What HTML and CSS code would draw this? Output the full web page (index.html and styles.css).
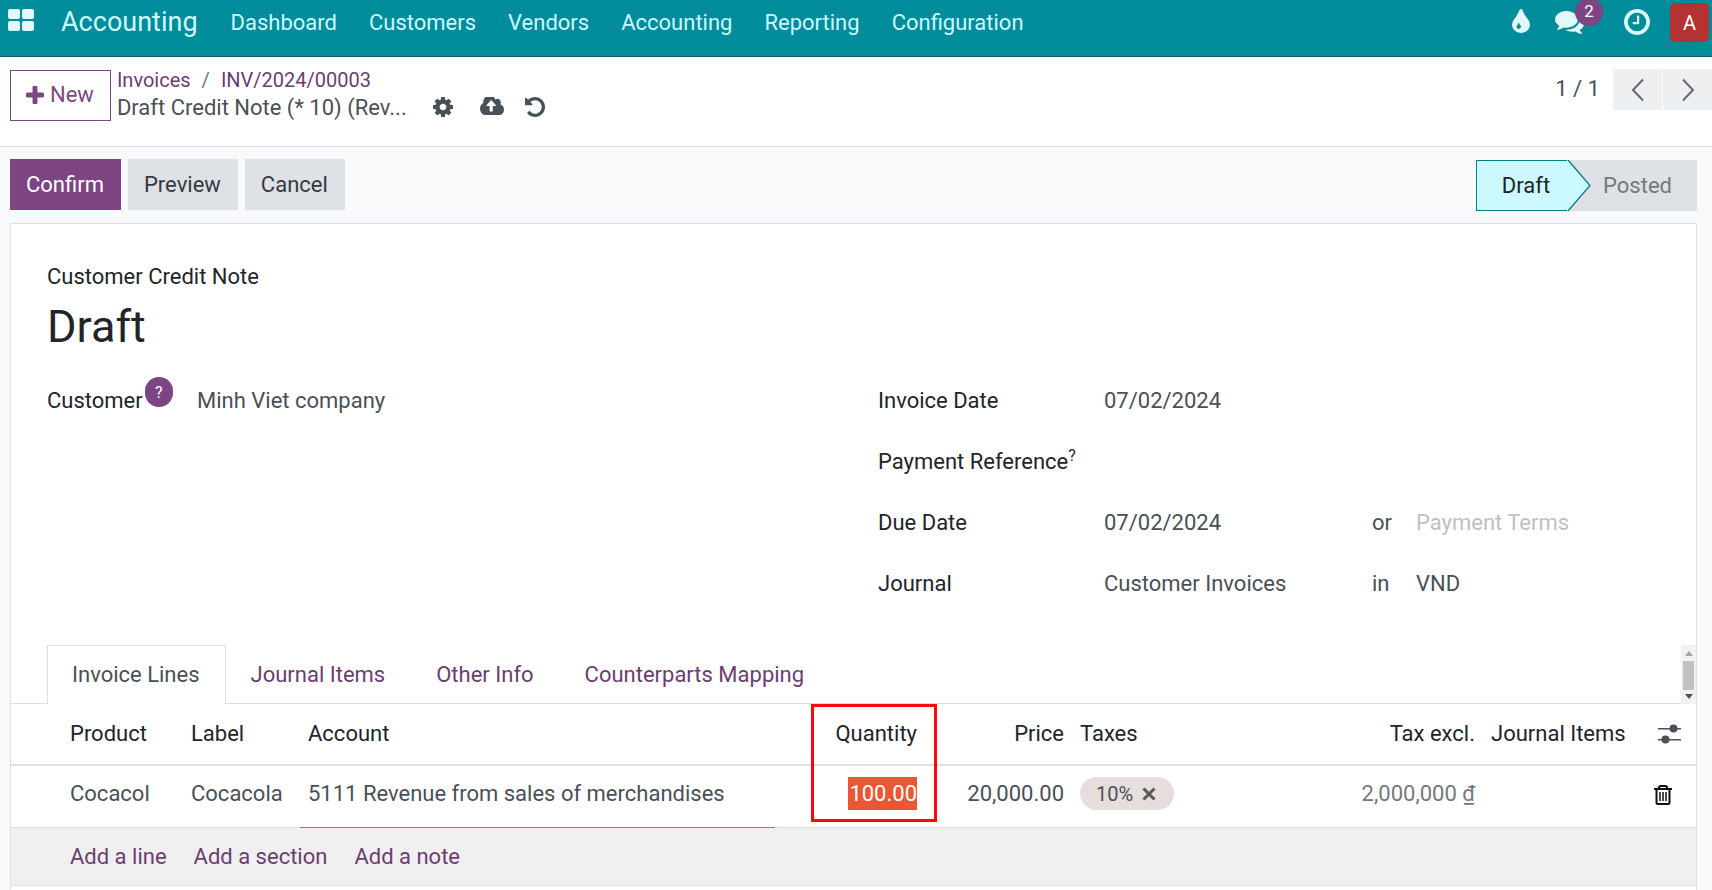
FILE: index.html
```html
<!DOCTYPE html>
<html lang="en">
<head>
<meta charset="utf-8">
<title>Draft Credit Note - Accounting</title>
<link rel="stylesheet" href="styles.css">
</head>
<body>
<header class="navbar">
  <button class="icon-btn apps" aria-label="Apps">
    <svg width="26" height="22" viewBox="0 0 26 22" fill="#e3f8fa"><rect width="12" height="10" rx="2"/><rect x="14" width="12" height="10" rx="2"/><rect y="12" width="12" height="10" rx="2"/><rect x="14" y="12" width="12" height="10" rx="2"/></svg>
  </button>
  <a class="brand" href="#">Accounting</a>
  <nav class="menu">
    <a href="#">Dashboard</a><a href="#">Customers</a><a href="#">Vendors</a><a href="#">Accounting</a><a href="#">Reporting</a><a href="#">Configuration</a>
  </nav>
  <div class="systray">
    <button class="icon-btn" aria-label="Theme"><svg width="18" height="25" viewBox="384 0 1024 1536" preserveAspectRatio="none" fill="#e3f8fa"><path d="M896 1152q0-36-20-69-1-1-15.5-22.5t-25.5-38-25-44-21-50.5q-4-16-21-16t-21 16q-7 23-21 50.5t-25 44-25.5 38-15.5 22.5q-20 33-20 69 0 53 37.5 90.5t90.5 37.5 90.5-37.5 37.5-90.5zm512-128q0 212-150 362t-362 150-362-150-150-362q0-145 81-275 6-9 62.5-90.5t101-151 99.5-178 83-201.5q9-30 34-47t51-17 51.5 17 33.5 47q28 93 83 201.5t99.5 178 101 151 62.5 90.5q81 127 81 275z"/></svg></button>
    <button class="icon-btn messages" aria-label="Messages"><svg width="29" height="23" viewBox="0 256 1792 1408" fill="#e3f8fa"><path d="M1408 768q0 139-94 257t-256.500 186.500-353.500 68.500q-86 0-176-16-124 88-278 128-36 9-86 16h-3q-11 0-20.500-8t-11.500-21q-1-3-1-6.500t.5-6.500 2-6l2.500-5 3.500-5.500 4-5 4.500-5 4-4.500q5-6 23-25t26-29.500 22.500-29 25-38.500 20.500-44q-124-72-195-177t-71-224q0-139 94-257t256.500-186.500 353.500-68.500 353.500 68.500 256.500 186.500 94 257zm384 256q0 120-71 224.500t-195 176.500q10 24 20.500 44t25 38.500 22.500 29 26 29.500 23 25q1 1 4 4.500t4.500 5 4 5 3.500 5.500l2.500 5 2 6 .5 6.500-1 6.500q-3 14-13 22t-22 7q-50-7-86-16-154-40-278-128-90 16-176 16-271 0-472-132 58 4 88 4 161 0 309-45t264-129q125-92 192-212t67-254q0-77-23-152 129 71 204 178t75 230z"/></svg><span class="badge">2</span></button>
    <button class="icon-btn clock" aria-label="Activities"><svg width="26" height="26" viewBox="128 128 1536 1536" fill="#d8fbff"><path d="M1024 544v448q0 14-9 23t-23 9h-320q-14 0-23-9t-9-23v-64q0-14 9-23t23-9h224v-352q0-14 9-23t23-9h64q14 0 23 9t9 23zm416 352q0-148-73-273t-198-198-273-73-273 73-198 198-73 273 73 273 198 198 273 73 273-73 198-198 73-273zm224 0q0 209-103 385.500t-279.500 279.500-385.500 103-385.500-103-279.500-279.500-103-385.500 103-385.500 279.500-279.500 385.500-103 385.500 103 279.500 279.500 103 385.500z"/></svg></button>
    <button class="avatar" aria-label="User menu">A</button>
  </div>
</header>

<section class="control-panel">
  <button class="btn btn-new"><svg width="18" height="18" viewBox="192 128 1408 1408" fill="currentColor"><path d="M1600 736v192q0 40-28 68t-68 28h-416v416q0 40-28 68t-68 28h-192q-40 0-68-28t-28-68v-416h-416q-40 0-68-28t-28-68v-192q0-40 28-68t68-28h416v-416q0-40 28-68t68-28h192q40 0 68 28t28 68v416h416q40 0 68 28t28 68z"/></svg>New</button>
  <div class="crumbs">
    <nav class="crumb-path" aria-label="Breadcrumb"><a href="#">Invoices</a><span class="slash">/</span><a href="#">INV/2024/00003</a></nav>
    <div class="crumb-current">
      <span class="crumb-title">Draft Credit Note (* 10) (Rev...</span>
      <button class="icon-btn gear" aria-label="Actions"><svg width="20" height="20" viewBox="128 128 1536 1536" fill="#495057"><path d="M1152 896q0-106-75-181t-181-75-181 75-75 181 75 181 181 75 181-75 75-181zm512-109v222q0 12-8 23t-20 13l-185 28q-19 54-39 91 35 50 107 138 10 12 10 25t-9 23q-27 37-99 108t-94 71q-12 0-26-9l-138-108q-44 23-91 38-16 136-29 186-7 28-36 28h-222q-14 0-24.500-8.500t-11.500-21.500l-28-184q-49-16-90-37l-141 107q-10 9-25 9-14 0-25-11-126-114-165-168-7-10-7-23 0-12 8-23 15-21 51-66.500t54-70.500q-27-50-41-99l-183-27q-13-2-21-12.500t-8-23.500v-222q0-12 8-23t19-13l186-28q14-46 39-92-40-57-107-138-10-12-10-24 0-10 9-23 26-36 98.500-107.500t94.500-71.500q13 0 26 10l138 107q44-23 91-38 16-136 29-186 7-28 36-28h222q14 0 24.500 8.500t11.500 21.500l28 184q49 16 90 37l142-107q9-9 24-9 13 0 25 10 129 119 165 170 7 8 7 22 0 12-8 23-15 21-51 66.500t-54 70.500q26 50 41 98l183 28q13 2 21 12.500t8 23.500z"/></svg></button>
      <button class="icon-btn save" aria-label="Save"><svg width="24" height="18" viewBox="-64 256 1920 1280" preserveAspectRatio="none" fill="#495057"><path d="M1216 864q0-14-9-23l-352-352q-9-9-23-9t-23 9l-351 351q-10 12-10 24 0 14 9 23t23 9h224v352q0 13 9.500 22.500t22.500 9.500h192q13 0 22.500-9.500t9.500-22.500v-352h224q13 0 22.500-9.500t9.500-22.500zm640 288q0 159-112.500 271.500t-271.500 112.500h-1088q-185 0-316.500-131.500t-131.500-316.500q0-130 70-240t188-165q-2-30-2-43 0-212 150-362t362-150q156 0 285.500 87t188.500 231q71-62 166-62 106 0 181 75t75 181q0 76-41 138 130 31 213.500 135.500t83.500 238.500z"/></svg></button>
      <button class="icon-btn" aria-label="Discard"><svg width="20" height="20" viewBox="128 128 1536 1536" fill="#495057"><path d="M1664 896q0 156-61 298t-164 245-245 164-298 61q-172 0-327-72.500t-264-204.500q-7-10-6.500-22.500t8.500-20.500l137-138q10-9 25-9 16 2 23 12 73 95 179 147t225 52q104 0 198.500-40.500t163.500-109.500 109.500-163.500 40.500-198.500-40.500-198.500-109.500-163.500-163.500-109.500-198.500-40.500q-98 0-188 35.500t-160 101.500l137 138q31 30 14 69-17 40-59 40h-448q-26 0-45-19t-19-45v-448q0-42 40-59 39-17 69 14l130 129q107-101 244.500-156.500t284.500-55.500q156 0 298 61t245 164 164 245 61 298z"/></svg></button>
    </div>
  </div>
  <div class="pager">
    <span class="pager-count">1 / 1</span>
    <button class="pager-btn" aria-label="Previous"><svg width="14" height="24" viewBox="0 0 14 24" fill="none" stroke="#666a6e" stroke-width="2"><path d="M12 1.500 2 12l10 10.500"/></svg></button>
    <button class="pager-btn" aria-label="Next"><svg width="14" height="24" viewBox="0 0 14 24" fill="none" stroke="#666a6e" stroke-width="2"><path d="m2 1.500 10 10.500L2 22.500"/></svg></button>
  </div>
</section>

<main class="content">
  <div class="statusbar">
    <button class="btn btn-primary">Confirm</button>
    <button class="btn btn-secondary">Preview</button>
    <button class="btn btn-secondary">Cancel</button>
    <div class="stages">
      <button class="stage stage-current">Draft<svg class="stage-arrow" width="25" height="51" viewBox="0 0 25 51"><path d="M0 0h1l22 25.500L1 51H0z" fill="#ccf9ff"/><path d="M1 0l22 25.500L1 51" fill="none" stroke="#017e84" stroke-width="1.300"/></svg></button>
      <button class="stage stage-next">Posted</button>
    </div>
  </div>

  <div class="sheet">
    <div class="title-block">
      <div class="doc-type">Customer Credit Note</div>
      <h1>Draft</h1>
    </div>

    <div class="groups">
      <div class="group">
        <label class="field-label" for="customer">Customer<span class="help-badge">?</span></label>
        <input class="field" id="customer" value="Minh Viet company">
      </div>
      <div class="group group-right">
        <label class="field-label" for="inv-date">Invoice Date</label>
        <input class="field" id="inv-date" value="07/02/2024">
        <label class="field-label" for="pay-ref">Payment Reference<sup>?</sup></label>
        <input class="field" id="pay-ref">
        <label class="field-label" for="due-date">Due Date</label>
        <input class="field" id="due-date" value="07/02/2024">
        <label class="joiner" for="terms">or</label>
        <input class="field" id="terms" placeholder="Payment Terms">
        <label class="field-label" for="journal">Journal</label>
        <input class="field" id="journal" value="Customer Invoices">
        <label class="joiner" for="currency">in</label>
        <input class="field" id="currency" value="VND">
      </div>
    </div>

    <div class="tabs">
      <div class="tab-list" role="tablist">
        <button class="tab tab-active" role="tab" aria-selected="true">Invoice Lines</button>
        <button class="tab" role="tab">Journal Items</button>
        <button class="tab" role="tab">Other Info</button>
        <button class="tab" role="tab">Counterparts Mapping</button>
      </div>
      <div class="scroller" aria-hidden="true">
        <svg width="8" height="5" viewBox="0 0 8 5"><path d="M0 5 4 0l4 5z" fill="#a3a3a3"/></svg>
        <span class="thumb"></span>
        <svg width="8" height="5" viewBox="0 0 8 5"><path d="M0 0h8L4 5z" fill="#505050"/></svg>
      </div>
    </div>

    <table class="lines">
      <colgroup><col class="c-product"><col class="c-label"><col class="c-account"><col class="c-qty"><col class="c-price"><col class="c-taxes"><col class="c-excl"><col class="c-items"><col class="c-tools"></colgroup>
      <thead>
        <tr>
          <th class="first">Product</th><th>Label</th><th>Account</th><th class="num qty-head">Quantity</th><th class="num">Price</th><th>Taxes</th><th class="num">Tax excl.</th><th>Journal Items</th>
          <th class="tools"><button class="icon-btn" aria-label="Optional columns"><svg width="23" height="20" viewBox="0 0 23 20" fill="#495057"><path d="M0 4h23v1.500H0zM0 15h23v1.500H0z"/><circle cx="15.500" cy="4.500" r="4"/><circle cx="7.500" cy="15.500" r="4"/></svg></button></th>
        </tr>
      </thead>
      <tbody>
        <tr>
          <td class="first"><input class="cell" aria-label="Product" value="Cocacol"></td>
          <td><input class="cell" aria-label="Label" value="Cocacola"></td>
          <td class="editing"><input class="cell" aria-label="Account" value="5111 Revenue from sales of merchandises"></td>
          <td class="num"><input class="cell cell-selected" aria-label="Quantity" value="100.00"></td>
          <td class="num"><input class="cell" aria-label="Price" value="20,000.00"></td>
          <td><span class="tag">10%<button class="icon-btn" aria-label="Remove tax"><svg width="14" height="14" viewBox="0 0 14 14" stroke="#5b5858" stroke-width="3"><path d="m1.500 1.500 11 11m0-11-11 11"/></svg></button></span></td>
          <td class="num muted">2,000,000 ₫</td>
          <td></td>
          <td class="tools trash"><button class="icon-btn" aria-label="Delete row"><svg width="18" height="20" viewBox="0 0 18 20" fill="none" stroke="#111" stroke-width="2"><path d="M0 4h18M5 4V2.500Q5 1 6.500 1h5Q13 1 13 2.500V4M2.500 4v13.500Q2.500 19 4 19h10q1.500 0 1.500-1.500V4"/><path d="M6 7v9M9 7v9M12 7v9" stroke-width="1.500"/></svg></button></td>
        </tr>
      </tbody>
      <tfoot>
        <tr><td class="first" colspan="9"><div class="adders"><a href="#">Add a line</a><a href="#">Add a section</a><a href="#">Add a note</a></div></td></tr>
      </tfoot>
    </table>
  </div>
</main>
</body>
</html>
```
FILE: styles.css
```css
*, *::after { box-sizing: border-box; }

body {
  margin: 0;
  min-height: 100vh;
  display: flex;
  flex-direction: column;
  background: #f8f9fb;
  color: #212529;
  font: 22px/32px Roboto, "Noto Sans", sans-serif;
}

a { color: #6b3e70; text-decoration: none; }
button, input { font: inherit; color: inherit; }
svg { display: block; }

.icon-btn {
  display: block;
  padding: 0;
  border: 0;
  background: none;
}

/* Top bar */
.navbar {
  display: flex;
  align-items: flex-start;
  height: 57px;
  padding: 0 3px 0 8px;
  background: #008c9b;
  border-bottom: 1px solid #1d5a66;
}
.navbar a { color: #ccf9ff; }
.apps { padding-top: 9px; }
.brand { margin: 6px 33px 0 27px; font-size: 27px; }
.menu { display: flex; gap: 32px; padding-top: 7px; }
.systray { display: flex; align-items: flex-start; margin-left: auto; padding-top: 3px; }
.systray .icon-btn { padding-top: 5px; }
.systray .messages { position: relative; margin: 3px 40px 0 25px; }
.systray .clock { padding-top: 6px; margin-right: 20px; }
.badge {
  position: absolute;
  left: 20px;
  top: -8px;
  width: 28px;
  height: 28px;
  border-radius: 14px;
  background: #7d4583;
  color: #fff;
  font-size: 17px;
  line-height: 26px;
}
.avatar {
  width: 39px;
  height: 39px;
  padding: 0;
  border: 0;
  border-radius: 5px;
  background: #b53232;
  color: #fff;
  font-size: 20px;
}

/* Control panel */
.control-panel {
  display: flex;
  align-items: flex-start;
  min-height: 90px;
  padding: 12px 0 0 10px;
  background: #fff;
  border-bottom: 1px solid #dcdfe3;
}
.btn {
  height: 51px;
  padding: 0 17px 0 16px;
  border: 0;
}
.btn-new {
  display: flex;
  align-items: center;
  gap: 6px;
  margin-top: 1px;
  padding: 0 16px 2px 15px;
  border: 1px solid #7d4583;
  background: #fff;
  color: #7d4583;
}
.crumbs { padding-left: 6px; margin-top: -3px; }
.crumb-path { font-size: 20px; line-height: 28px; }
.slash { margin: 0 11px; color: #6c757d; }
.crumb-current { display: flex; align-items: flex-start; color: #495057; line-height: 28px; }
.crumb-current .icon-btn { padding-top: 3px; }
.gear { margin-left: 26px; }
.save { margin: 0 21px 0 27px; }
.pager { display: flex; align-items: flex-start; gap: 1px; margin-left: auto; }
.pager-count { margin-right: 12px; color: #495057; line-height: 40px; }
.pager-btn {
  display: grid;
  place-items: center;
  width: 49px;
  height: 41px;
  padding: 0;
  border: 0;
  background: #eeeff1;
}

/* Status bar */
.content { flex: 1; display: flex; flex-direction: column; padding: 12px 15px 0 10px; }
.statusbar { display: flex; gap: 7px; margin-bottom: 12px; }
.btn-primary { background: #7d4583; color: #fff; }
.btn-secondary { background: #dee1e6; color: #343a40; }
.stages { display: flex; margin-left: auto; padding-top: 1px; height: 52px; }
.stage { position: relative; border: 0; padding: 0 25px; }
.stage-current {
  padding: 0 17px 0 25px;
  border: 1px solid #017e84;
  border-right: 0;
  background: #ccf9ff;
}
.stage-next { padding-left: 36px; background: #dee1e6; color: #75797e; }
.stage-arrow { position: absolute; z-index: 1; left: 100%; top: -1px; }

/* Sheet */
.sheet {
  flex: 1;
  background: #fff;
  border: 1px solid #dcdfe3;
  border-bottom: 0;
}
.title-block { padding: 37px 36px 0; }
h1 { margin: 8px 0 0; font-size: 45px; font-weight: 400; line-height: 52px; }
.groups {
  display: grid;
  grid-template-columns: 831px 1fr;
  padding: 17px 36px 0;
}
.group {
  display: grid;
  grid-template-columns: 150px 1fr;
  align-content: start;
  align-items: center;
  grid-auto-rows: 61px;
}
.group-right { grid-template-columns: 226px 257px 55px 1fr; }
.field-label { grid-column: 1; display: flex; white-space: nowrap; }
.group-right > .field { grid-column: 2; }
.group-right > .joiner { grid-column: 3; padding-left: 11px; }
.group-right > .joiner + .field { grid-column: 4; }
.field {
  min-width: 0;
  width: 100%;
  height: 32px;
  padding: 0;
  border: 0;
  background: none;
  color: #495057;
}
.field::placeholder { color: #bcc1c6; opacity: 1; }
.joiner { color: #495057; }
sup { font-size: 16px; line-height: 20px; }
.help-badge {
  width: 28px;
  height: 30px;
  margin: -8px 0 0 2px;
  border-radius: 14px;
  background: #7d4583;
  color: #fff;
  font-size: 16px;
  line-height: 32px;
  text-align: center;
}

/* Tabs */
.tabs {
  display: flex;
  justify-content: space-between;
  height: 59px;
  margin-top: 31px;
  padding-left: 36px;
  box-shadow: inset 0 -1px #dcdfe3;
}
.tab-list { display: flex; }
.tab {
  padding: 0 25px 0 24px;
  border: 1px solid transparent;
  border-bottom: 0;
  background: none;
  color: #6b3e70;
}
.tab-active { background: #fff; border-color: #dcdfe3; color: #495057; }
.scroller {
  display: flex;
  flex-direction: column;
  justify-content: space-between;
  align-items: center;
  width: 15px;
  padding: 6px 0 5px;
  background: #f1f1f1;
}
.thumb { width: 11px; height: 29px; background: #c1c1c1; }

/* Invoice lines */
.lines { width: 100%; border-collapse: separate; border-spacing: 0; table-layout: fixed; }
.c-product { width: 172px; }
.c-label { width: 117px; }
.c-account { width: 475px; }
.c-qty { width: 150px; }
.c-price { width: 147px; }
.c-excl { width: 180px; }
.c-items { width: 160px; }
.c-tools { width: 53px; }
.lines th, .lines td { padding: 0 8px; text-align: left; font-weight: 400; white-space: nowrap; }
.lines th { height: 62px; border-bottom: 2px solid #dcdfe3; }
.lines td { height: 62px; border-bottom: 1px solid #dcdfe3; }
.lines tbody td { padding-bottom: 6px; }
.lines .first { padding-left: 59px; }
.lines .num { text-align: right; }
.lines .tools { padding-left: 15px; padding-right: 0; }
.lines .trash { padding-left: 11px; padding-bottom: 3px; }
.lines .editing { border-bottom-color: #3c9ea2; }
.lines .muted { color: #75797e; }
.cell {
  display: block;
  width: 100%;
  height: 33px;
  padding: 0;
  border: 0;
  background: none;
  color: #495057;
  text-align: inherit;
}
.cell-selected { width: 69px; margin-left: auto; background: #e95734; color: #fff; }
.qty-head { position: relative; }
.qty-head::after {
  content: "";
  position: absolute;
  z-index: 1;
  top: 0;
  right: -12px;
  width: 126px;
  height: 118px;
  border: 3px solid #fb0808;
}
.tag {
  display: inline-flex;
  align-items: center;
  gap: 9px;
  height: 33px;
  padding: 0 18px 0 16px;
  border-radius: 17px;
  background: #e6dedd;
  color: #495057;
  font-size: 20px;
  vertical-align: middle;
}
.lines tfoot td { height: 58px; background: #f0f0f0; }
.adders { display: flex; gap: 27px; }
```
